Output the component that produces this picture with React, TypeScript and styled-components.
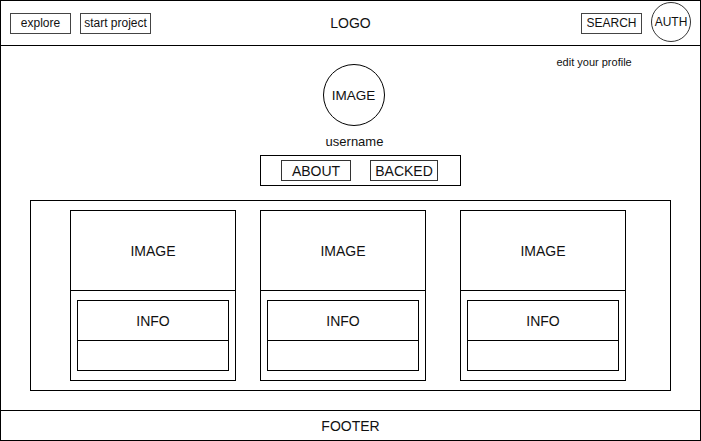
import { FC } from "react"
import styled, { createGlobalStyle } from "styled-components"

const GlobalStyle = createGlobalStyle`
  html, body {
    margin: 0;
    padding: 0;
    background: #fff;
  }
  body {
    font-family: "Liberation Sans", Arial, Helvetica, sans-serif;
    color: #111;
  }
  * {
    box-sizing: border-box;
  }
`

const Frame = styled.div`
  width: 701px;
  height: 441px;
  border: 1px solid #000;
  display: flex;
  flex-direction: column;
`

const Header = styled.header`
  flex: none;
  height: 45px;
  border-bottom: 1px solid #000;
  display: grid;
  grid-template-columns: 1fr auto 1fr;
  align-items: center;
  padding: 0 9px;
`

const NavGroup = styled.nav<{ $end?: boolean }>`
  display: flex;
  align-items: center;
  gap: 9px;
  justify-self: ${({ $end }) => ($end ? "end" : "start")};
`

const NavButton = styled.div<{ $width: number }>`
  width: ${({ $width }) => $width}px;
  height: 21px;
  border: 1px solid #444;
  display: flex;
  align-items: center;
  justify-content: center;
  font-size: 12px;
  white-space: nowrap;
  cursor: pointer;
`

const Logo = styled.div`
  font-size: 14px;
`

const AuthCircle = styled.div`
  width: 40px;
  height: 40px;
  margin-bottom: 2px;
  border: 1px solid #333;
  border-radius: 50%;
  display: flex;
  align-items: center;
  justify-content: center;
  font-size: 12px;
`

const Main = styled.main`
  flex: 1;
  display: flex;
  flex-direction: column;
  align-items: center;
`

const ProfileTop = styled.div`
  align-self: stretch;
  display: grid;
  grid-template-columns: 1fr auto 1fr;
  align-items: start;
`

const Avatar = styled.div`
  grid-column: 2;
  width: 62px;
  height: 62px;
  margin: 18px 0 0 6px;
  border: 1px solid #000;
  border-radius: 50%;
  display: flex;
  align-items: center;
  justify-content: center;
  font-size: 13.5px;
`

const EditLink = styled.a`
  grid-column: 3;
  margin: 10px 0 0 172px;
  font-size: 11px;
  line-height: 13px;
  color: inherit;
  text-decoration: none;
  white-space: nowrap;
`

const Username = styled.div`
  margin: 8px 0 0 8px;
  font-size: 13px;
  line-height: 15px;
`

const Tabs = styled.div`
  width: 201px;
  height: 31px;
  margin: 6px 0 0 20px;
  border: 1px solid #000;
  display: flex;
  align-items: center;
  gap: 19px;
  padding-left: 20px;
`

const Tab = styled.div<{ $width: number }>`
  width: ${({ $width }) => $width}px;
  height: 21px;
  border: 1px solid #333;
  display: flex;
  align-items: center;
  justify-content: center;
  font-size: 14px;
  cursor: pointer;
`

const Projects = styled.section`
  width: 641px;
  height: 191px;
  margin-top: 14px;
  border: 1px solid #000;
  display: flex;
  align-items: flex-start;
  padding-top: 9px;
`

const Card = styled.div<{ $offset: number }>`
  width: 166px;
  height: 171px;
  margin-left: ${({ $offset }) => $offset}px;
  border: 1px solid #000;
  display: flex;
  flex-direction: column;
`

const CardImage = styled.div`
  height: 80px;
  border-bottom: 1px solid #000;
  display: flex;
  align-items: center;
  justify-content: center;
  font-size: 14px;
`

const CardBody = styled.div`
  flex: 1;
  padding: 9px 6px;
`

const Info = styled.div`
  height: 71px;
  border: 1px solid #000;
  display: flex;
  flex-direction: column;
`

const InfoTitle = styled.div`
  height: 40px;
  border-bottom: 1px solid #000;
  display: flex;
  align-items: center;
  justify-content: center;
  font-size: 14px;
`

const InfoMeta = styled.div`
  flex: 1;
`

const Footer = styled.footer`
  flex: none;
  height: 30px;
  border-top: 1px solid #000;
  display: flex;
  align-items: center;
  justify-content: center;
  font-size: 14px;
`

const cards = [{ offset: 39 }, { offset: 24 }, { offset: 34 }]

const ProjectCard: FC<{ offset: number }> = ({ offset }) => (
  <Card $offset={offset}>
    <CardImage>IMAGE</CardImage>
    <CardBody>
      <Info>
        <InfoTitle>INFO</InfoTitle>
        <InfoMeta />
      </Info>
    </CardBody>
  </Card>
)

const App: FC = () => {
  return (
    <>
      <GlobalStyle />
      <Frame>
        <Header>
          <NavGroup>
            <NavButton $width={61}>explore</NavButton>
            <NavButton $width={71}>start project</NavButton>
          </NavGroup>
          <Logo>LOGO</Logo>
          <NavGroup $end>
            <NavButton $width={61}>SEARCH</NavButton>
            <AuthCircle>AUTH</AuthCircle>
          </NavGroup>
        </Header>

        <Main>
          <ProfileTop>
            <Avatar>IMAGE</Avatar>
            <EditLink href="#">edit your profile</EditLink>
          </ProfileTop>
          <Username>username</Username>
          <Tabs>
            <Tab $width={70}>ABOUT</Tab>
            <Tab $width={68}>BACKED</Tab>
          </Tabs>
          <Projects>
            {cards.map((c, i) => (
              <ProjectCard key={i} offset={c.offset} />
            ))}
          </Projects>
        </Main>

        <Footer>FOOTER</Footer>
      </Frame>
    </>
  )
}

export default App
